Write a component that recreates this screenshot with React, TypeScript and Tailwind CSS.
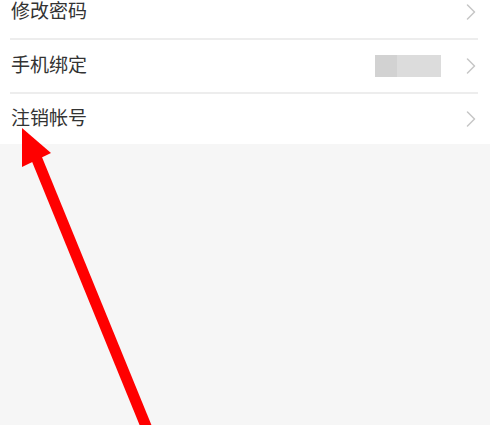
const rows = [
  { label: "修改密码", masked: false, rowClass: "h-[38px] pb-[14px]" },
  { label: "手机绑定", masked: true, rowClass: "h-[52px]" },
  { label: "注销帐号", masked: false, rowClass: "h-[50px]" },
];

function Chevron() {
  return (
    <svg width="10" height="16" viewBox="0 0 10 16" fill="none" stroke="#c6c6c6" strokeWidth="1.5" strokeLinecap="round" strokeLinejoin="round">
      <polyline points="1.5,1 8.5,8 1.5,15" />
    </svg>
  );
}

export default function App() {
  return (
    <div
      className="relative w-[490px] h-[425px] overflow-hidden bg-[#f6f6f6]"
      style={{ fontFamily: "'Noto Sans CJK SC', 'Noto Sans', sans-serif" }}
    >
      {/* Settings list */}
      <div className="bg-white">
        {rows.map((row, i) => (
          <div key={row.label}>
            <div className={`flex items-center pl-[11px] pr-[14px] ${row.rowClass}`}>
              <span className="text-[19px] leading-[16px] text-[#333333] flex-1 mb-[4px]">{row.label}</span>
              {row.masked && (
                <div className="flex h-[22px] w-[66px] mr-[25px]">
                  <div className="w-[22px] bg-[#d2d2d2]" />
                  <div className="flex-1 bg-[#dcdcdc]" />
                </div>
              )}
              <Chevron />
            </div>
            {i < rows.length - 1 && <div className="h-[2px] bg-[#ededed] ml-[10px] mr-[12px]" />}
          </div>
        ))}
      </div>

      {/* Red annotation arrow */}
      <svg className="absolute inset-0 pointer-events-none" width="490" height="425" viewBox="0 0 490 425">
        <line x1="34" y1="152" x2="150" y2="436" stroke="#ff0000" strokeWidth="11" />
        <polygon points="22,128 22,167 51,153" fill="#ff0000" />
      </svg>
    </div>
  );
}
